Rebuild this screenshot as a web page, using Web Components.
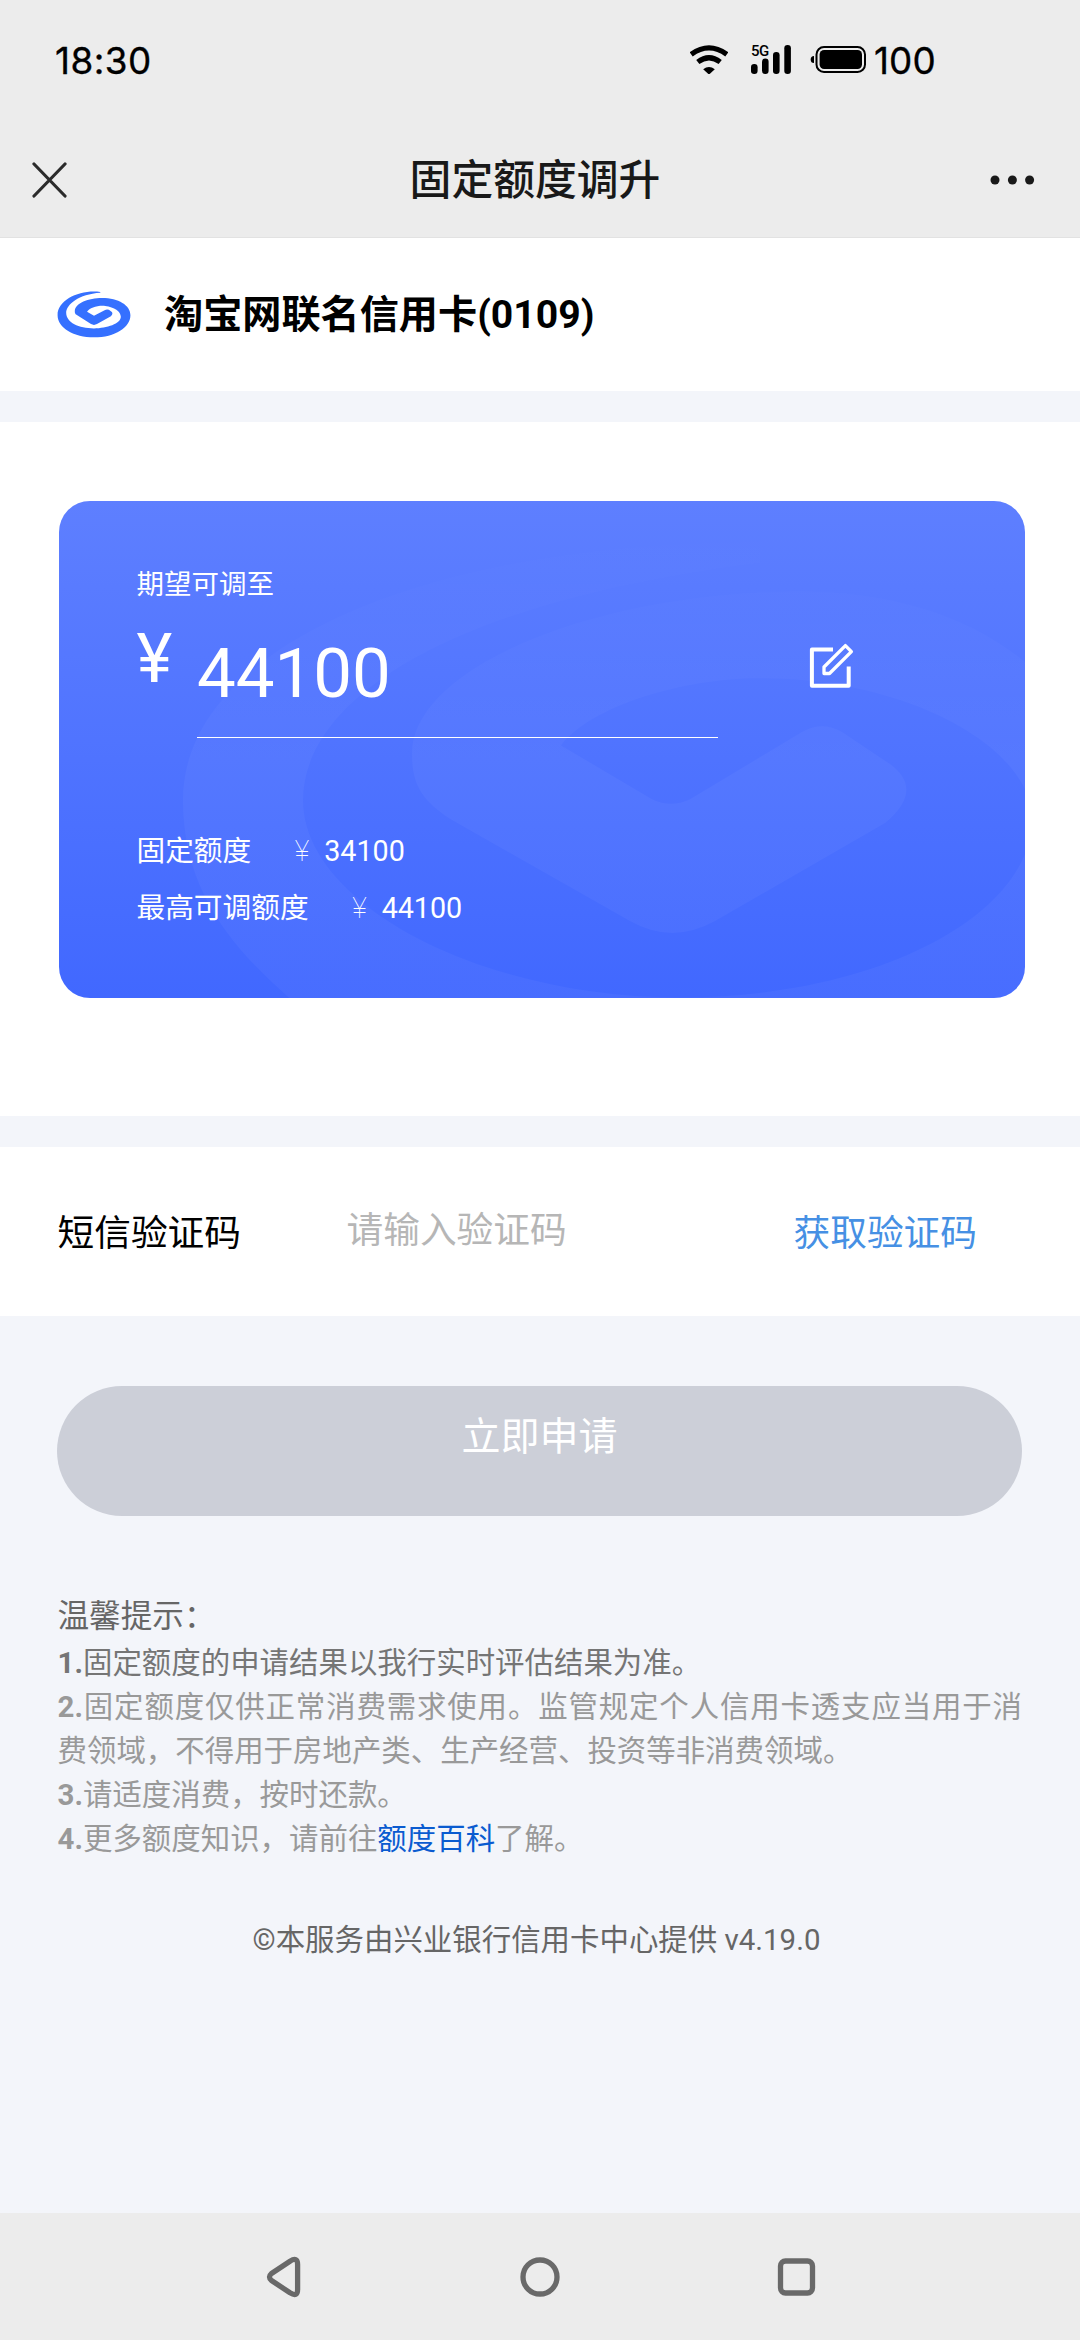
<!DOCTYPE html>
<html lang="zh-CN">
<head>
<meta charset="utf-8">
<title>固定额度调升</title>
<style>
html,body{margin:0;padding:0}
body{width:1080px;height:2340px;overflow:hidden;background:#f3f5fa;font-family:Roboto,"Noto Sans CJK SC",sans-serif;color:#000}
</style>
</head>
<body>
<limit-page></limit-page>
<script>
const define = (name, html) => customElements.define(name, class extends HTMLElement {
  constructor() {
    super();
    const t = document.createElement('template');
    t.innerHTML = html;
    this.attachShadow({ mode: 'open' }).append(t.content.cloneNode(true));
  }
});

define('status-bar', `
<style>
:host{display:flex;align-items:flex-start;height:120px;box-sizing:border-box;padding:38px 0 0 55px;font-family:Inter,sans-serif;font-size:36.8px;line-height:46px;font-weight:400;color:#000;white-space:nowrap;-webkit-text-stroke:.35px #000}
.time{width:635px;letter-spacing:.5px}
svg{display:block;height:46px;flex:none;-webkit-text-stroke:0}
.wifi{width:38px}.sig{width:42px;margin-left:22px}.bat{width:56px;margin-left:18px}
.pct{margin-left:8px;letter-spacing:.1px}
</style>
<span class="time">18:30</span>
<svg class="wifi" viewBox="690 38 38 46"><g fill="none" stroke="#000" stroke-width="5.2"><path d="M691.2 54.3Q709 41.500 726.800 54.300"/><path d="M697.800 62Q709 53.500 720.200 62"/></g><path d="M703.200 69.200Q709 64.600 714.800 69.200L710.200 73.600Q709 74.600 707.800 73.600Z"/></svg>
<svg class="sig" viewBox="750 38 42 46"><text x="751" y="56" font-family="Roboto" font-size="15" font-weight="500" letter-spacing="-.6">5G</text><rect x="751" y="64" width="6.600" height="10" rx="3.200"/><rect x="762" y="58.500" width="6.600" height="15.500" rx="3.200"/><rect x="773" y="52" width="6.600" height="22" rx="3.200"/><rect x="784.300" y="45" width="6.600" height="29" rx="3.200"/></svg>
<svg class="bat" viewBox="809 38 56 46"><path d="M813 56Q809.700 56 809.700 59.500Q809.700 63 813 63Z"/><rect x="815.500" y="47" width="48.500" height="25" rx="7.500" fill="none" stroke="#000" stroke-width="2"/><rect x="818.600" y="50" width="42.400" height="19" rx="4.500"/></svg>
<span class="pct">100</span>
`);

define('title-bar', `
<style>
:host{display:flex;align-items:center;height:118px;box-sizing:border-box;border-bottom:1px solid #e2e2e2;padding:2px 45px 0 32px;color:#191919}
svg{display:block;flex:none}
.t{flex:1;text-align:center;font-size:41.8px;line-height:60px;font-weight:500;padding:2px 0 0 3px}
.close{width:36px;height:36px;margin-right:18px}
.more{width:54px;height:20px}
</style>
<svg class="close" viewBox="0 0 36 36" fill="none" stroke="#2b2b2b" stroke-width="3.2" stroke-linecap="round"><path d="M2 2L33 34M33 2L2 34"/></svg>
<span class="t"><slot></slot></span>
<svg class="more" viewBox="0 0 54 20" fill="#191919"><circle cx="14" cy="10" r="4.500"/><circle cx="31.400" cy="10" r="4.500"/><circle cx="48.600" cy="10" r="4.500"/></svg>
`);

define('card-name', `
<style>
:host{display:flex;align-items:center;height:153px;background:#fff;padding-left:56.500px;font-size:39.150px;font-weight:700;line-height:56px}
svg{width:74px;height:46.700px;flex:none;margin-right:33.500px}
</style>
<svg viewBox="20 19 222 141"><path fill="#3570ff" d="M150 22C90 14 21 45 21 92C21 130 70 159 131 159C195 159 241 128 241 92C241 62 205 40 155 40C115 40 73 55 73 80C73 85 74 88 78 91L122 119Q131 124 140 119L182 95Q190 88 184 82L176 76Q170 73 163 77L131 94L110 82C118 70 140 62 165 64C192 68 212 80 212 97C212 118 170 132 131 132C85 132 47 115 47 85C47 60 85 28 150 24Z"/></svg>
<span><slot></slot></span>
`);

define('limit-row', `
<style>
:host{display:flex;align-items:center;height:57px;font-size:28.700px;line-height:40px;white-space:pre}
.y{font-weight:100;margin-left:43.500px;width:29.500px}
</style>
<slot name="label"></slot><span class="y">¥</span><slot name="value"></slot>
`);

define('limit-card', `
<style>
:host{display:block;background:#fff;padding:79.500px 55px 118px 59px}
.card{display:grid;height:497px;border-radius:31px;overflow:hidden;background:linear-gradient(#5e7fff,#4168ff);color:#fff}
.mark,.body{grid-area:1/1}
.mark{width:966px;height:497px;display:block}
.body{padding:64px 0 0 77.500px;display:flex;flex-direction:column;align-items:flex-start;min-height:0}
.cap{font-size:27.500px;line-height:40px}
.amt{display:flex;align-items:flex-start;height:133px}
.yen{font-size:68px;line-height:80px;width:60.500px;margin-top:14px}
.field{width:521px;height:133px;box-sizing:border-box;border-bottom:1.500px solid #fff;font-size:69px;line-height:80px;padding-top:29px}
.pen{width:46px;height:46px;margin:37px 0 0 90px}
.rows{margin-top:84.500px}
</style>
<div class="card">
<svg class="mark" viewBox="59 501 966 497"><defs><linearGradient id="g" x1="0" y1="520" x2="0" y2="760" gradientUnits="userSpaceOnUse"><stop offset="0" stop-color="#fff" stop-opacity="0"/><stop offset="1" stop-color="#fff" stop-opacity=".036"/></linearGradient></defs><path transform="translate(0 -15.840) scale(1 1.033)" fill="url(#g)" d="M760 540C430 540 183 640 183 790C183 880 235 935 290 982C500 1110 900 1110 1130 900C1130 700 1000 588 800 588C600 588 412 660 412 745C412 775 422 790 450 808L630 907Q672 930 715 907L885 812Q925 780 890 755L842 724Q822 713 802 724L690 789Q671 798 652 789L561 737C590 700 680 672 760 672C910 672 1032 740 1032 808C1032 900 880 981 680 981C480 981 303 890 303 790C303 700 430 600 760 560Z"/></svg>
<div class="body">
<span class="cap">期望可调至</span>
<div class="amt"><span class="yen">¥</span><div class="field">44100</div>
<svg class="pen" viewBox="808 637 46 46" fill="none" stroke="#fff" stroke-width="4" stroke-linejoin="round"><path d="M833 644.500H811.900V680.700H848.700V661.500"/><path stroke-width="3.300" d="M824 668.500V662L845.400 640.600L851.400 646.600L829.500 668.500Z"/></svg></div>
<div class="rows"><limit-row><span slot="label">固定额度</span><span slot="value">34100</span></limit-row><limit-row><span slot="label">最高可调额度</span><span slot="value">44100</span></limit-row></div>
</div></div>
`);

define('sms-row', `
<style>
:host{display:flex;align-items:center;height:169px;background:#fff;padding-left:57.500px;font-size:36.700px;line-height:50px}
.l{width:289px;padding-top:6px}.p{width:447px;color:#b6b6b6}.g{color:#4690e4;padding-top:6px}
</style>
<span class="l">短信验证码</span><span class="p">请输入验证码</span><span class="g">获取验证码</span>
`);

define('apply-button', `
<style>
:host{display:block;height:130px;box-sizing:border-box;margin:70px 58px 0 57px;border-radius:65px;background:#cccfd8;color:#fff;text-align:center;font-size:39px;line-height:56px;padding-top:23px}
</style><slot></slot>
`);

define('tips-block', `
<style>
:host{display:block;margin:77px 58px 0 57.500px;font-size:29.450px;line-height:44px;color:#999;text-align:justify}
p{margin:0}.h{font-size:31.600px;line-height:48px;color:#666}.d{color:#757575}
b{font-weight:700}a{color:#0a5bd0}
</style>
<p class="h">温馨提示：</p>
<p class="d"><b>1.</b>固定额度的申请结果以我行实时评估结果为准。</p>
<p><b>2.</b>固定额度仅供正常消费需求使用。监管规定个人信用卡透支应当用于消费领域，不得用于房地产类、生产经营、投资等非消费领域。</p>
<p><b>3.</b>请适度消费，按时还款。</p>
<p><b>4.</b>更多额度知识，请前往<a>额度百科</a>了解。</p>
`);

define('page-foot', `
<style>:host{display:block;margin-top:57px;text-align:center;font-size:29.450px;line-height:44px;color:#666;padding-right:7px}</style><slot></slot>
`);

define('nav-bar', `
<style>
:host{display:flex;justify-content:space-between;height:127px;background:#ececec;box-sizing:border-box;padding:42px 261px 0}
svg{width:46px;height:44px;display:block;fill:none;stroke:#696969;stroke-width:5.300}
</style>
<svg viewBox="261 2255 46 44"><path stroke-linejoin="round" d="M290 2261.200Q297.600 2256.500 297.600 2264.500V2289.500Q297.600 2297.500 290 2292.800L271.500 2280.500Q267.500 2277 271.500 2273.500Z"/></svg>
<svg viewBox="517 2255 46 44"><circle cx="540" cy="2277" r="17"/></svg>
<svg viewBox="773 2255 46 44"><rect x="780.500" y="2261" width="32" height="32" rx="5"/></svg>
`);

define('limit-page', `
<style>
:host{display:flex;flex-direction:column;width:1080px;height:2340px}
.top{background:#ececec}.gap{height:30.500px;flex:none}.grow{flex:1}
</style>
<div class="top"><status-bar></status-bar><title-bar>固定额度调升</title-bar></div>
<card-name>淘宝网联名信用卡(0109)</card-name>
<div class="gap"></div>
<limit-card></limit-card>
<div class="gap"></div>
<sms-row></sms-row>
<apply-button>立即申请</apply-button>
<tips-block></tips-block>
<page-foot>©本服务由兴业银行信用卡中心提供 v4.19.0</page-foot>
<div class="grow"></div>
<nav-bar></nav-bar>
`);
</script>
</body>
</html>
